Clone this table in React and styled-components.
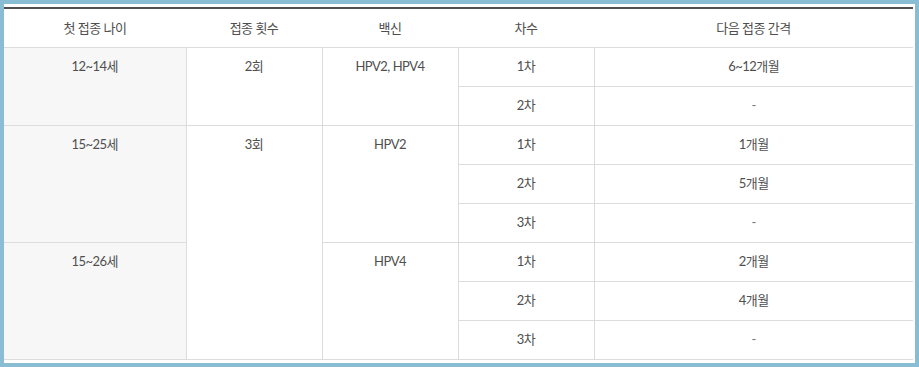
import styled, { createGlobalStyle } from 'styled-components'

const GlobalStyle = createGlobalStyle`
    html, body {
        margin: 0;
        padding: 0;
        background: #fff;
    }
`

const rows = [
    { age: { text: '12~14세', span: 2 }, count: { text: '2회', span: 2 }, vaccine: { text: 'HPV2, HPV4', span: 2 }, dose: '1차', gap: '6~12개월' },
    { dose: '2차', gap: '-' },
    { age: { text: '15~25세', span: 3 }, count: { text: '3회', span: 6 }, vaccine: { text: 'HPV2', span: 3 }, dose: '1차', gap: '1개월' },
    { dose: '2차', gap: '5개월' },
    { dose: '3차', gap: '-' },
    { age: { text: '15~26세', span: 3 }, vaccine: { text: 'HPV4', span: 3 }, dose: '1차', gap: '2개월' },
    { dose: '2차', gap: '4개월' },
    { dose: '3차', gap: '-' },
]

const widths = [182, 136, 136, 136, 319]

export default function App() {
    return (
        <>
            <GlobalStyle />
            <Frame>
                <Table>
                    <colgroup>
                        {widths.map((w, i) => <col key={i} style={{ width: w }} />)}
                    </colgroup>
                    <thead>
                        <tr>
                            <HeadCell>첫 접종 나이</HeadCell>
                            <HeadCell>접종 횟수</HeadCell>
                            <HeadCell>백신</HeadCell>
                            <HeadCell>차수</HeadCell>
                            <HeadCell>다음 접종 간격</HeadCell>
                        </tr>
                    </thead>
                    <tbody>
                        {rows.map((row, i) => (
                            <tr key={i}>
                                {row.age && <Cell $shade $first rowSpan={row.age.span}>{row.age.text}</Cell>}
                                {row.count && <Cell rowSpan={row.count.span}>{row.count.text}</Cell>}
                                {row.vaccine && <Cell rowSpan={row.vaccine.span}>{row.vaccine.text}</Cell>}
                                <Cell>{row.dose}</Cell>
                                <Cell $last $muted={row.gap === '-'}>{row.gap}</Cell>
                            </tr>
                        ))}
                    </tbody>
                </Table>
            </Frame>
        </>
    )
}

const Frame = styled.div`
    box-sizing: border-box;
    width: 919px;
    height: 367px;
    border: 4px solid #88bdd4;
    padding: 3px 2px 3px 0;
    background: #fff;
`

const Table = styled.table`
    width: 909px;
    table-layout: fixed;
    border-collapse: collapse;
    font-family: Lato, "Noto Sans CJK KR", sans-serif;
    font-size: 13px;
    letter-spacing: -0.5px;
    color: #4f4f4f;
`

const HeadCell = styled.th`
    font-weight: normal;
    height: 38px;
    padding: 0;
    line-height: 18px;
    text-align: center;
    vertical-align: middle;
    border-top: 2px solid #505050;
    border-bottom: 1px solid #dcdcdc;
`

const Cell = styled.td`
    height: 38px;
    padding: 9px 0 11px;
    box-sizing: border-box;
    line-height: 18px;
    text-align: center;
    vertical-align: top;
    background: ${p => (p.$shade ? '#f7f7f7' : '#fff')};
    color: ${p => (p.$muted ? '#7a7a7a' : '#4f4f4f')};
    border: 1px solid #dcdcdc;
    border-left: ${p => (p.$first ? 'none' : '1px solid #dcdcdc')};
    border-right: ${p => (p.$last ? 'none' : '1px solid #dcdcdc')};
    border-top: none;
`
